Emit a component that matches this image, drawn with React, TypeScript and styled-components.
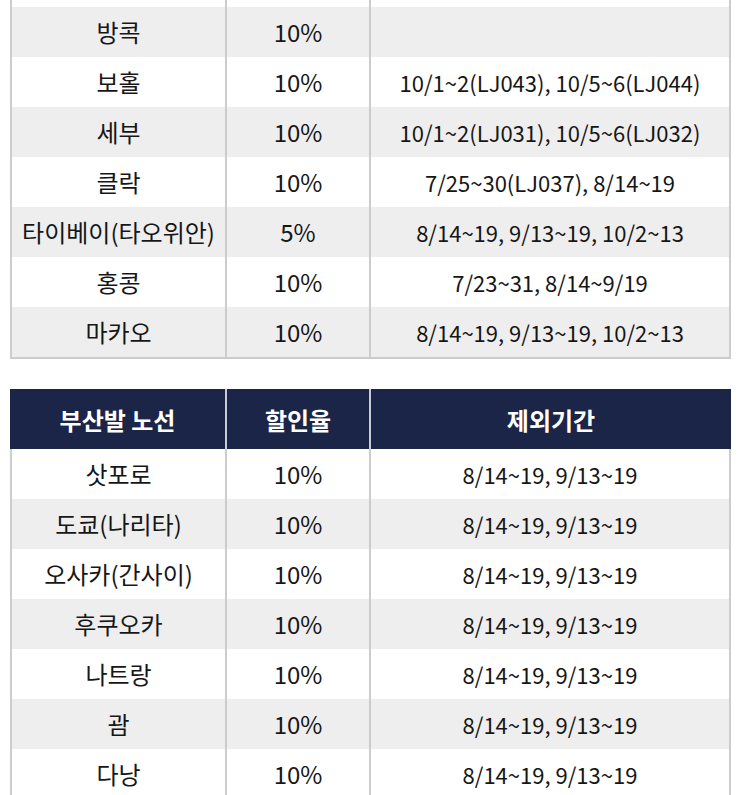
import React from "react";
import styled, { createGlobalStyle } from "styled-components";

const GlobalStyle = createGlobalStyle`
  html, body {
    margin: 0;
    padding: 0;
    background: #ffffff;
  }
  body {
    font-family: "Noto Sans CJK KR", "Noto Sans", sans-serif;
    color: #161616;
  }
`;

const Page = styled.div`
  padding: 0 10px;
  display: flex;
  flex-direction: column;
  gap: 30px;
`;

const Table = styled.table`
  width: 721px;
  table-layout: fixed;
  border-collapse: separate;
  border-spacing: 0;
  font-size: 24px;
`;

const HeadCell = styled.th`
  height: 60px;
  padding: 0;
  background: #1b2548;
  color: #ffffff;
  font-weight: 700;
  font-size: 24px;
  text-align: center;
  vertical-align: middle;
  border-right: 2px solid #c9ccd4;

  &:last-child {
    border-right: none;
  }
`;

const Row = styled.tr<{ $shade?: boolean }>`
  background: ${(p) => (p.$shade ? "#eeeeee" : "#ffffff")};
`;

const Cell = styled.td<{ $h?: number; $last?: boolean; $small?: boolean }>`
  height: ${(p) => p.$h ?? 50}px;
  padding: 0;
  text-align: center;
  vertical-align: middle;
  white-space: nowrap;
  line-height: 1;
  font-size: ${(p) => (p.$small ? 22 : 24)}px;
  border-right: 2px solid #cccccc;
  border-bottom: ${(p) => (p.$last ? "2px solid #cccccc" : "none")};

  &:first-child {
    border-left: 2px solid #cccccc;
  }
`;

type Route = { name: string; rate: string; excluded: string };

const first: Route[] = [
  { name: "방콕", rate: "10%", excluded: "" },
  { name: "보홀", rate: "10%", excluded: "10/1~2(LJ043), 10/5~6(LJ044)" },
  { name: "세부", rate: "10%", excluded: "10/1~2(LJ031), 10/5~6(LJ032)" },
  { name: "클락", rate: "10%", excluded: "7/25~30(LJ037), 8/14~19" },
  { name: "타이베이(타오위안)", rate: "5%", excluded: "8/14~19, 9/13~19, 10/2~13" },
  { name: "홍콩", rate: "10%", excluded: "7/23~31, 8/14~9/19" },
  { name: "마카오", rate: "10%", excluded: "8/14~19, 9/13~19, 10/2~13" },
];

const busan: Route[] = [
  { name: "삿포로", rate: "10%", excluded: "8/14~19, 9/13~19" },
  { name: "도쿄(나리타)", rate: "10%", excluded: "8/14~19, 9/13~19" },
  { name: "오사카(간사이)", rate: "10%", excluded: "8/14~19, 9/13~19" },
  { name: "후쿠오카", rate: "10%", excluded: "8/14~19, 9/13~19" },
  { name: "나트랑", rate: "10%", excluded: "8/14~19, 9/13~19" },
  { name: "괌", rate: "10%", excluded: "8/14~19, 9/13~19" },
  { name: "다낭", rate: "10%", excluded: "8/14~19, 9/13~19" },
];

function Cols() {
  return (
    <colgroup>
      <col style={{ width: 217 }} />
      <col style={{ width: 144 }} />
      <col style={{ width: 360 }} />
    </colgroup>
  );
}

export default function App() {
  return (
    <>
      <GlobalStyle />
      <Page>
        <Table>
          <Cols />
          <tbody>
            {/* tail of the row above, scrolled out of view */}
            <Row>
              <Cell $h={7} />
              <Cell $h={7} />
              <Cell $h={7} />
            </Row>
            {first.map((r, i) => {
              const last = i === first.length - 1;
              return (
                <Row key={r.name} $shade={i % 2 === 0}>
                  <Cell $last={last}>{r.name}</Cell>
                  <Cell $last={last}>{r.rate}</Cell>
                  <Cell $last={last} $small>
                    {r.excluded}
                  </Cell>
                </Row>
              );
            })}
          </tbody>
        </Table>

        <Table>
          <Cols />
          <thead>
            <tr>
              <HeadCell>부산발 노선</HeadCell>
              <HeadCell>할인율</HeadCell>
              <HeadCell>제외기간</HeadCell>
            </tr>
          </thead>
          <tbody>
            {busan.map((r, i) => (
              <Row key={r.name} $shade={i % 2 === 1}>
                <Cell>{r.name}</Cell>
                <Cell>{r.rate}</Cell>
                <Cell $small>{r.excluded}</Cell>
              </Row>
            ))}
          </tbody>
        </Table>
      </Page>
    </>
  );
}
